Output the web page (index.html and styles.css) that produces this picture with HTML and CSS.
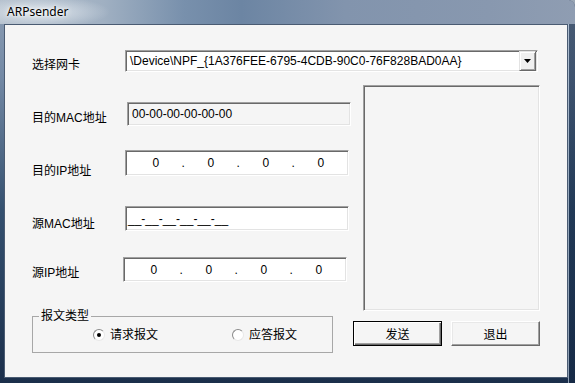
FILE: index.html
```html
<!DOCTYPE html>
<html lang="zh-CN">
<head>
    <meta charset="UTF-8">
    <meta name="viewport" content="width=device-width, initial-scale=1.0">
    <title>ARPsender</title>
    <link rel="stylesheet" href="styles.css">
</head>
<body>
    <div class="window">
        <div class="titlebar"><span class="title">ARPsender</span></div>
        <div class="client">
            <div class="nic-row">
                <label class="lbl lbl-nic">选择网卡</label>
                <div class="combo">
                    <span class="combo-text">\Device\NPF_{1A376FEE-6795-4CDB-90C0-76F828BAD0AA}</span>
                    <span class="combo-btn">
                        <svg width="7" height="4" viewBox="0 0 7 4"><polygon points="0,0 7,0 3.5,4" fill="#000"/></svg>
                    </span>
                </div>
            </div>
            <div class="main">
                <div class="fields">
                    <div class="field-row row-dmac">
                        <label class="lbl">目的MAC地址</label>
                        <div class="edit edit-ro">00-00-00-00-00-00</div>
                    </div>
                    <div class="field-row row-dip">
                        <label class="lbl">目的IP地址</label>
                        <div class="edit ip">
                            <span>0</span><span>.</span><span>0</span><span>.</span><span>0</span><span>.</span><span>0</span>
                        </div>
                    </div>
                    <div class="field-row row-smac">
                        <label class="lbl">源MAC地址</label>
                        <div class="edit mask">__-__-__-__-__-__</div>
                    </div>
                    <div class="field-row row-sip">
                        <label class="lbl">源IP地址</label>
                        <div class="edit ip">
                            <span>0</span><span>.</span><span>0</span><span>.</span><span>0</span><span>.</span><span>0</span>
                        </div>
                    </div>
                    <fieldset class="group">
                        <legend>报文类型</legend>
                        <div class="radios">
                            <label class="radio"><span class="radio-dot checked"></span>请求报文</label>
                            <label class="radio"><span class="radio-dot"></span>应答报文</label>
                        </div>
                    </fieldset>
                </div>
                <div class="side">
                    <div class="listbox"></div>
                    <div class="buttons">
                        <button type="button" class="btn btn-default">发送</button>
                        <button type="button" class="btn">退出</button>
                    </div>
                </div>
            </div>
        </div>
    </div>
</body>
</html>
```

FILE: styles.css
```css
body {
    margin: 0;
    background: #9ba7b6;
    font-family: 'Liberation Sans', 'Noto Sans CJK SC', sans-serif;
    font-size: 12px;
    color: #000;
    overflow: hidden;
}

.window {
    width: 575px;
    height: 383px;
    box-sizing: border-box;
    padding: 0 7px 5px 4px;
    display: flex;
    flex-direction: column;
    border-top-right-radius: 7px;
    background:
        linear-gradient(to right, rgba(0, 0, 0, 0) 568px, rgba(190, 205, 222, 0.7) 568px, rgba(190, 205, 222, 0.7) 569px, rgba(18, 38, 66, 0.55) 569px),
        linear-gradient(to bottom, #8d9eb4 0%, #7389a5 20%, #34506f 55%, #1b2f4b 100%);
}

.titlebar {
    height: 24px;
    margin: 0 -7px 0 -4px;
    border-top-right-radius: 7px;
    background:
        radial-gradient(ellipse 70px 16px at 40px 12px, rgba(230, 236, 242, 0.9), rgba(230, 236, 242, 0) 100%),
        linear-gradient(to right, #b3bfcc 0%, #a0b0c2 18%, #7890ac 32%, #6c85a3 42%, #8294ad 60%, #8898af 85%, #8f9db2 100%);
}

.title {
    display: block;
    padding-left: 7px;
    line-height: 23px;
    font-family: 'Noto Sans', sans-serif;
    font-size: 12px;
    text-shadow: 0 0 6px #fff, 0 0 3px #fff;
}

.client {
    flex: 1;
    border: 1px solid #4a5b72;
    background: #f5f5f5;
    padding: 25px 0 0 27px;
}

.lbl {
    display: block;
    line-height: 14px;
    width: 93px;
    flex: none;
}

/* top row: adapter choice */
.nic-row {
    display: flex;
    align-items: flex-start;
}

.lbl-nic {
    margin-top: 8px;
}

.combo {
    width: 413px;
    height: 22px;
    box-sizing: border-box;
    display: flex;
    align-items: center;
    background: #fff;
    border: 1px solid;
    border-color: #a0a0a0 #fff #fff #a0a0a0;
    box-shadow: inset 1px 1px #696969, inset -1px -1px #e3e3e3;
}

.combo-text {
    flex: 1;
    padding-left: 4px;
    white-space: nowrap;
    overflow: hidden;
}

.combo-btn {
    width: 17px;
    height: 20px;
    box-sizing: border-box;
    margin-right: 1px;
    display: flex;
    align-items: center;
    justify-content: center;
    background: #f0f0f0;
    border: 1px solid;
    border-color: #e3e3e3 #696969 #696969 #e3e3e3;
    box-shadow: inset 1px 1px #fff, inset -1px -1px #a0a0a0;
}

/* main area */
.main {
    display: flex;
    margin-top: 13px;
}

.fields {
    width: 321px;
    padding-top: 17px;
}

.field-row {
    display: flex;
    align-items: flex-start;
}

.edit {
    width: 224px;
    box-sizing: border-box;
    background: #fff;
    border: 1px solid;
    border-color: #a0a0a0 #fff #fff #a0a0a0;
    box-shadow: inset 1px 1px #696969, inset -1px -1px #e3e3e3;
    display: flex;
    align-items: center;
    white-space: nowrap;
}

.edit-ro {
    background: #f5f5f5;
    padding-left: 4px;
}

.mask {
    padding-left: 2px;
}

.ip {
    padding-left: 16px;
}

.ip span {
    width: 27.5px;
    text-align: center;
}

.row-dmac .lbl { width: 95px; margin-top: 9px; }
.row-dmac .edit { height: 24px; }

.row-dip { margin-top: 24px; }
.row-dip .lbl { margin-top: 14px; }
.row-dip .edit { height: 26px; }

.row-smac { margin-top: 28px; }
.row-smac .lbl { margin-top: 11px; }
.row-smac .edit { height: 25px; }

.row-sip { margin-top: 26px; }
.row-sip .lbl { width: 91px; margin-top: 9px; }
.row-sip .edit { height: 25px; }

/* message type group */
.group {
    margin: 27px 0 0 0;
    padding: 5px 0 0 0;
    width: 301px;
    height: 44px;
    box-sizing: border-box;
    border: 1px solid #a7a7a7;
    min-width: 0;
}

.group legend {
    margin-left: 6px;
    padding: 0 2px;
    line-height: 14px;
}

.radios {
    display: flex;
    gap: 74px;
    margin-left: 60px;
}

.radio {
    display: flex;
    align-items: center;
    gap: 5px;
    line-height: 14px;
}

.radio-dot {
    width: 12px;
    height: 12px;
    box-sizing: border-box;
    border-radius: 50%;
    border: 1px solid;
    border-color: #8a8a8a #e8e8e8 #e8e8e8 #8a8a8a;
    background: #fff;
    display: flex;
    align-items: center;
    justify-content: center;
}

.radio-dot.checked::after {
    content: "";
    width: 4px;
    height: 4px;
    border-radius: 50%;
    background: #000;
}

/* right side */
.side {
    width: 187px;
}

.listbox {
    margin-left: 10px;
    width: 177px;
    height: 226px;
    box-sizing: border-box;
    background: #f5f5f5;
    border: 1px solid;
    border-color: #a0a0a0 #fff #fff #a0a0a0;
    box-shadow: inset 1px 1px #696969, inset -1px -1px #e3e3e3;
}

.buttons {
    display: flex;
    gap: 9px;
    margin-top: 10px;
}

.btn {
    width: 89px;
    height: 25px;
    padding: 0;
    font-family: inherit;
    font-size: 12px;
    color: #000;
    background: #f5f5f5;
    border: 1px solid;
    border-color: #fff #696969 #696969 #fff;
    box-shadow: inset -1px -1px #a0a0a0, inset 1px 1px #e8e8e8;
}

.btn-default {
    border-color: #000;
    box-shadow: inset 1px 1px #fff, inset -1px -1px #696969, inset -2px -2px #a0a0a0;
}
```
